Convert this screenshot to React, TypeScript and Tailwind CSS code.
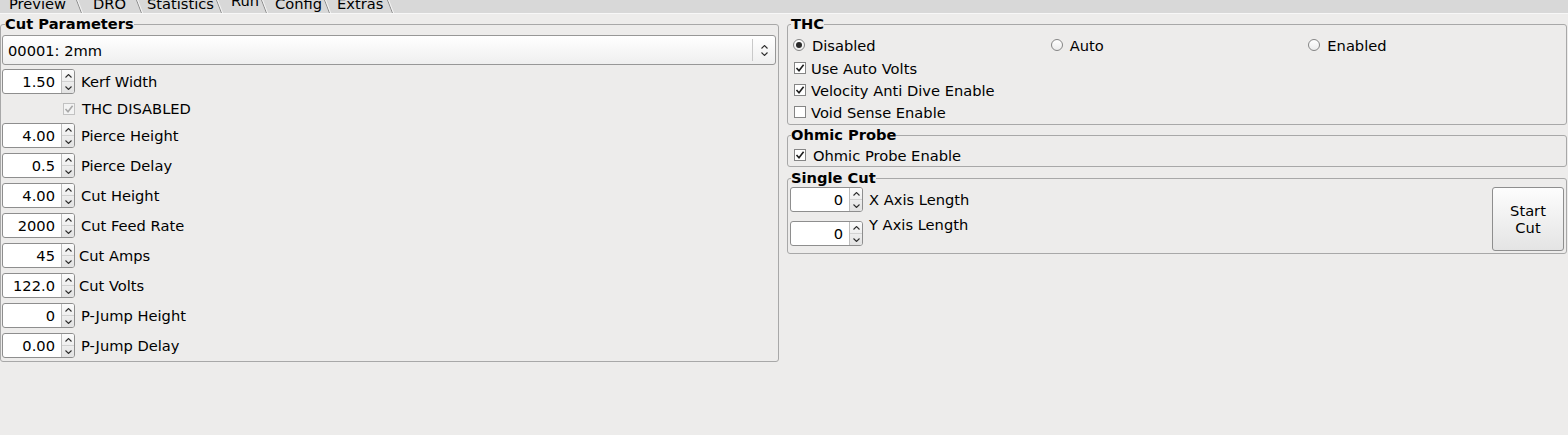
const tabs = [
  { label: "Preview", cls: "w-[76px] pl-[9px]", active: false },
  { label: "DRO", cls: "w-[53px] pl-[10px]", active: false },
  { label: "Statistics", cls: "w-[73px] pl-[4px]", active: false },
  { label: "Run", cls: "w-[38px] pl-[8px]", active: true },
  { label: "Config", cls: "w-[56px] pl-[7px]", active: false },
  { label: "Extras", cls: "w-[56px] pl-[6px]", active: false },
];

const cutParams = [
  { value: "4.00", label: "Pierce Height", tight: false },
  { value: "0.5", label: "Pierce Delay", tight: false },
  { value: "4.00", label: "Cut Height", tight: false },
  { value: "2000", label: "Cut Feed Rate", tight: false },
  { value: "45", label: "Cut Amps", tight: true },
  { value: "122.0", label: "Cut Volts", tight: true },
  { value: "0", label: "P-Jump Height", tight: false },
  { value: "0.00", label: "P-Jump Delay", tight: false },
];

function TabSlash() {
  return (
    <svg width="7" height="13" viewBox="0 0 7 13" className="shrink-0">
      <line x1="0.5" y1="0" x2="5.5" y2="13" stroke="#8c8c8c" strokeWidth="1" />
      <line x1="1.6" y1="0" x2="6.6" y2="13" stroke="#f4f4f4" strokeWidth="1" />
    </svg>
  );
}

function Chevron({ up }: { up?: boolean }) {
  return (
    <svg width="7" height="4" viewBox="0 0 7 4">
      <path d={up ? "M0.5 3.5L3.5 0.5L6.5 3.5" : "M0.5 0.5L3.5 3.5L6.5 0.5"} fill="none" stroke="#2e2e2e" strokeWidth="1.1" />
    </svg>
  );
}

function SpinBox({ value }: { value: string }) {
  return (
    <div className="flex h-[25px] w-[73px] shrink-0 overflow-hidden rounded-[3px] border border-[#8e8e8e] bg-white">
      <div className="flex flex-1 items-center justify-end pr-[6px]">{value}</div>
      <div className="flex w-[13px] flex-col border-l border-[#bdbdbd] bg-linear-to-b from-[#fbfbfb] to-[#e2e2e2]">
        <div className="flex flex-1 items-center justify-center">
          <Chevron up />
        </div>
        <div className="h-px bg-[#d2d2d2]" />
        <div className="flex flex-1 items-center justify-center">
          <Chevron />
        </div>
      </div>
    </div>
  );
}

function CheckBox({ checked, disabled }: { checked?: boolean; disabled?: boolean }) {
  return (
    <span
      className={`flex h-[12px] w-[12px] shrink-0 items-center justify-center border ${
        disabled ? "border-[#c2c2c2] bg-[#f3f3f3]" : "border-[#858585] bg-white"
      }`}
    >
      {checked && (
        <svg width="10" height="10" viewBox="0 0 10 10">
          <path d="M1.5 5L4 7.8L8.6 1.8" fill="none" stroke={disabled ? "#a8a8a8" : "#1e1e1e"} strokeWidth="1.6" />
        </svg>
      )}
    </span>
  );
}

function Radio({ checked, label }: { checked?: boolean; label: string }) {
  return (
    <div className="flex items-center gap-[7px]">
      <span className="flex h-[12px] w-[12px] items-center justify-center rounded-full border border-[#858585] bg-linear-to-b from-white to-[#ececec]">
        {checked && <span className="h-[6px] w-[6px] rounded-full bg-[#2a2a2a]" />}
      </span>
      <span>{label}</span>
    </div>
  );
}

function CheckRow({ label, checked, gap = "gap-[5px]" }: { label: string; checked?: boolean; gap?: string }) {
  return (
    <div className={`flex h-[22px] items-center pl-[6px] ${gap}`}>
      <CheckBox checked={checked} />
      <span>{label}</span>
    </div>
  );
}

function GroupBox({ title, className, children }: { title: string; className?: string; children: React.ReactNode }) {
  return (
    <fieldset className={`rounded-[3px] border border-[#a8a8a8] ${className ?? ""}`}>
      <legend className="ml-[3px] text-[14.67px] font-bold leading-[16px]">{title}</legend>
      {children}
    </fieldset>
  );
}

export default function App() {
  return (
    <div className="h-[435px] w-[1568px] overflow-hidden bg-[#edeceb] font-['DejaVu_Sans',sans-serif] text-[14.67px] leading-[17px] text-black">
      {/* Tab strip, cut off at the top */}
      <div className="flex h-[13px] overflow-hidden bg-[#d8d8d8]">
        {tabs.map((t) => (
          <div key={t.label} className="flex shrink-0">
            <div className={`shrink-0 ${t.cls}`}>
              <div className={t.active ? "-mt-[8px]" : "-mt-[5px]"}>{t.label}</div>
            </div>
            <TabSlash />
          </div>
        ))}
      </div>
      <div className="h-px bg-[#f7f7f7]" />

      <div className="mt-[2px] flex gap-[8px]">
        {/* Cut Parameters */}
        <GroupBox title="Cut Parameters" className="w-[779px] pb-[3px] pl-[1px] pr-[2px]">
          <div className="mt-[3px] mb-[4px] flex h-[30px] items-center rounded-[3px] border border-[#979797] bg-linear-to-b from-white to-[#efefef]">
            <span className="flex-1 pl-[5px]">00001: 2mm</span>
            <span className="my-[3px] w-px self-stretch bg-[#c9c9c9]" />
            <span className="flex w-[22px] flex-col items-center justify-center gap-[3px]">
              <Chevron up />
              <Chevron />
            </span>
          </div>
          <div className="flex flex-col gap-[5px]">
            <div className="flex items-center gap-[6px]">
              <SpinBox value="1.50" />
              <span>Kerf Width</span>
            </div>
            <div className="flex h-[19px] items-center gap-[7px]">
              <div className="flex w-[73px] justify-end">
                <CheckBox checked disabled />
              </div>
              <span>THC DISABLED</span>
            </div>
            {cutParams.map((p) => (
              <div key={p.label} className={`flex items-center ${p.tight ? "gap-[4px]" : "gap-[6px]"}`}>
                <SpinBox value={p.value} />
                <span>{p.label}</span>
              </div>
            ))}
          </div>
        </GroupBox>

        {/* Right column */}
        <div className="flex w-[780px] flex-col gap-[2px]">
          <GroupBox title="THC" className="pb-[1px]">
            <div className="mt-[3px] grid h-[20px] grid-cols-3 items-center pl-[5px]">
              <Radio checked label="Disabled" />
              <Radio label="Auto" />
              <Radio label="Enabled" />
            </div>
            <div className="mt-[2px]">
              <CheckRow checked label="Use Auto Volts" />
              <CheckRow checked label="Velocity Anti Dive Enable" />
              <CheckRow label="Void Sense Enable" />
            </div>
          </GroupBox>

          <GroupBox title="Ohmic Probe">
            <div className="pt-[1px]">
              <CheckRow checked label="Ohmic Probe Enable" gap="gap-[7px]" />
            </div>
          </GroupBox>

          <GroupBox title="Single Cut" className="mt-[1px]">
            <div className="flex items-start justify-between pt-[1px] pb-[2px] pl-[2px] pr-[2px]">
              <div className="flex flex-col gap-[9px]">
                <div className="flex items-center gap-[6px]">
                  <SpinBox value="0" />
                  <span>X Axis Length</span>
                </div>
                <div className="flex items-start gap-[6px]">
                  <SpinBox value="0" />
                  <span className="-mt-[5px]">Y Axis Length</span>
                </div>
              </div>
              <button className="flex h-[64px] w-[72px] flex-col items-center justify-center rounded-[3px] border border-[#8e8e8e] bg-linear-to-b from-[#fdfdfd] to-[#e4e4e4] leading-[17px]">
                <span>Start</span>
                <span>Cut</span>
              </button>
            </div>
          </GroupBox>
        </div>
      </div>
    </div>
  );
}
